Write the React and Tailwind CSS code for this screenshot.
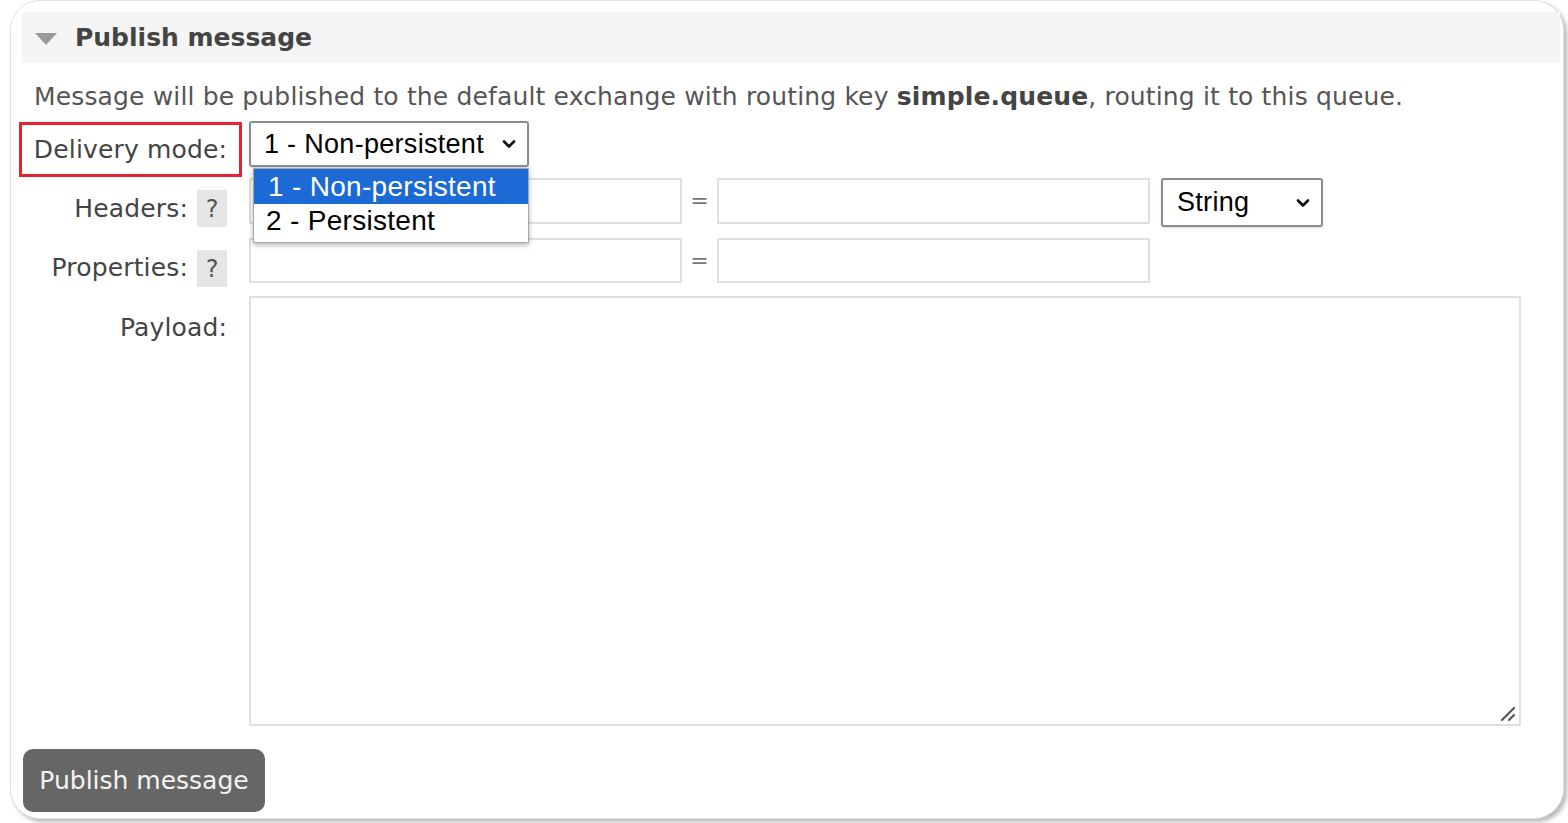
import React from 'react';

const verdana = { fontFamily: '"DejaVu Sans", Verdana, sans-serif' };
const arial = { fontFamily: '"Liberation Sans", Arial, sans-serif' };

function Chevron() {
  return (
    <svg width="14" height="10" viewBox="0 0 14 10" className="shrink-0">
      <path d="M2 2.5 L7 7.5 L12 2.5" fill="none" stroke="#111" strokeWidth="2.6" strokeLinecap="round" strokeLinejoin="round" />
    </svg>
  );
}

function Help() {
  return (
    <span className="mt-[12px] flex h-[37px] w-[30px] items-center justify-center bg-[#e6e6e6] text-[24px] text-[#555]">?</span>
  );
}

export default function App() {
  return (
    <div className="h-[823px] w-[1568px] overflow-hidden bg-white text-[#444]" style={verdana}>
      <div className="ml-[10px] h-[819px] w-[1554px] rounded-[30px] border border-[#e2e2e2] bg-white pl-[11px] pr-[3px] pt-[11px] shadow-[3px_3px_4px_rgba(0,0,0,0.28)]">
        {/* Header */}
        <div className="flex h-[51px] items-center bg-[#f5f5f5]">
          <svg width="22" height="12" viewBox="0 0 22 12" className="ml-[13px] mt-[2px]">
            <path d="M0 0 L22 0 L11 12 Z" fill="#9a9a9a" />
          </svg>
          <h2 className="ml-[18px] text-[25px] font-bold leading-none text-[#444]">Publish message</h2>
        </div>

        <p className="mt-[18px] pl-[12px] text-[25px] leading-[32px] tracking-[0.15px] text-[#555]">
          Message will be published to the default exchange with routing key <b className="text-[#444]">simple.queue</b>, routing it to this queue.
        </p>

        <div className="relative pt-[8px]">
          {/* Delivery mode */}
          <div className="flex h-[46px]">
            <div className="relative flex w-[205px] justify-end pt-[13px]">
              <span className="text-[25px] leading-[32px] tracking-[0.15px]">Delivery mode:</span>
              <div className="absolute left-[-3px] top-[1px] h-[55px] w-[223px] border-[3px] border-[#e8202f]" />
            </div>
            <div className="ml-[22px] flex h-[46px] w-[280px] items-center justify-between rounded-[3px] border-2 border-[#8c8c8c] pl-[13px] pr-[11px] text-[27px] tracking-[0.3px] text-black shadow-[0_1px_2px_rgba(0,0,0,0.15)]" style={arial}>
              <span>1 - Non-persistent</span>
              <Chevron />
            </div>
          </div>

          {/* Headers */}
          <div className="mt-[11px] flex">
            <div className="flex w-[205px] justify-end gap-[9px]">
              <span className="pt-[15px] text-[25px] leading-[32px] tracking-[0.15px]">Headers:</span>
              <Help />
            </div>
            <div className="ml-[22px] h-[46px] w-[433px] border-2 border-[#e0e0e0]" />
            <span className="w-[35px] pt-[6px] text-center text-[22px] text-[#777]">=</span>
            <div className="h-[46px] w-[433px] border-2 border-[#e0e0e0]" />
            <div className="ml-[11px] flex h-[49px] w-[162px] items-center justify-between rounded-[3px] border-2 border-[#8c8c8c] pl-[14px] pr-[11px] text-[27px] tracking-[0.3px] text-black shadow-[0_1px_2px_rgba(0,0,0,0.15)]" style={arial}>
              <span>String</span>
              <Chevron />
            </div>
          </div>

          {/* Properties */}
          <div className="mt-[11px] flex">
            <div className="flex w-[205px] justify-end gap-[9px]">
              <span className="pt-[14px] text-[25px] leading-[32px] tracking-[0.15px]">Properties:</span>
              <Help />
            </div>
            <div className="ml-[22px] h-[45px] w-[433px] border-2 border-[#e0e0e0]" />
            <span className="w-[35px] pt-[6px] text-center text-[22px] text-[#777]">=</span>
            <div className="h-[45px] w-[433px] border-2 border-[#e0e0e0]" />
          </div>

          {/* Payload */}
          <div className="mt-[9px] flex">
            <div className="flex w-[205px] justify-end pt-[16px]">
              <span className="text-[25px] leading-[32px] tracking-[0.15px]">Payload:</span>
            </div>
            <div className="relative ml-[22px]">
              <textarea className="block h-[430px] w-[1272px] resize-none border-2 border-[#e0e0e0] outline-none" />
              <svg width="18" height="18" viewBox="0 0 18 18" className="absolute bottom-[4px] right-[4px]">
                <path d="M3 16 L15 4" stroke="#555" strokeWidth="2.2" strokeLinecap="round" />
                <path d="M10 16 L15 11" stroke="#555" strokeWidth="2.2" strokeLinecap="round" />
              </svg>
            </div>
          </div>

          {/* Dropdown list */}
          <div className="absolute left-[231px] top-[55px] w-[276px] border border-[#a8a8a8] bg-white text-[28px] tracking-[0.3px] text-black shadow-[0_2px_5px_rgba(0,0,0,0.3)]" style={arial}>
            <div className="h-[35px] bg-[#1b6ad6] pl-[14px] leading-[35px] text-white">1 - Non-persistent</div>
            <div className="h-[38px] pl-[12px] leading-[34px]">2 - Persistent</div>
          </div>
        </div>

        <button className="ml-[1px] mt-[23px] h-[63px] w-[242px] rounded-[10px] bg-[#666] text-[25px] text-[#f4f4f4]">
          Publish message
        </button>
      </div>
    </div>
  );
}
